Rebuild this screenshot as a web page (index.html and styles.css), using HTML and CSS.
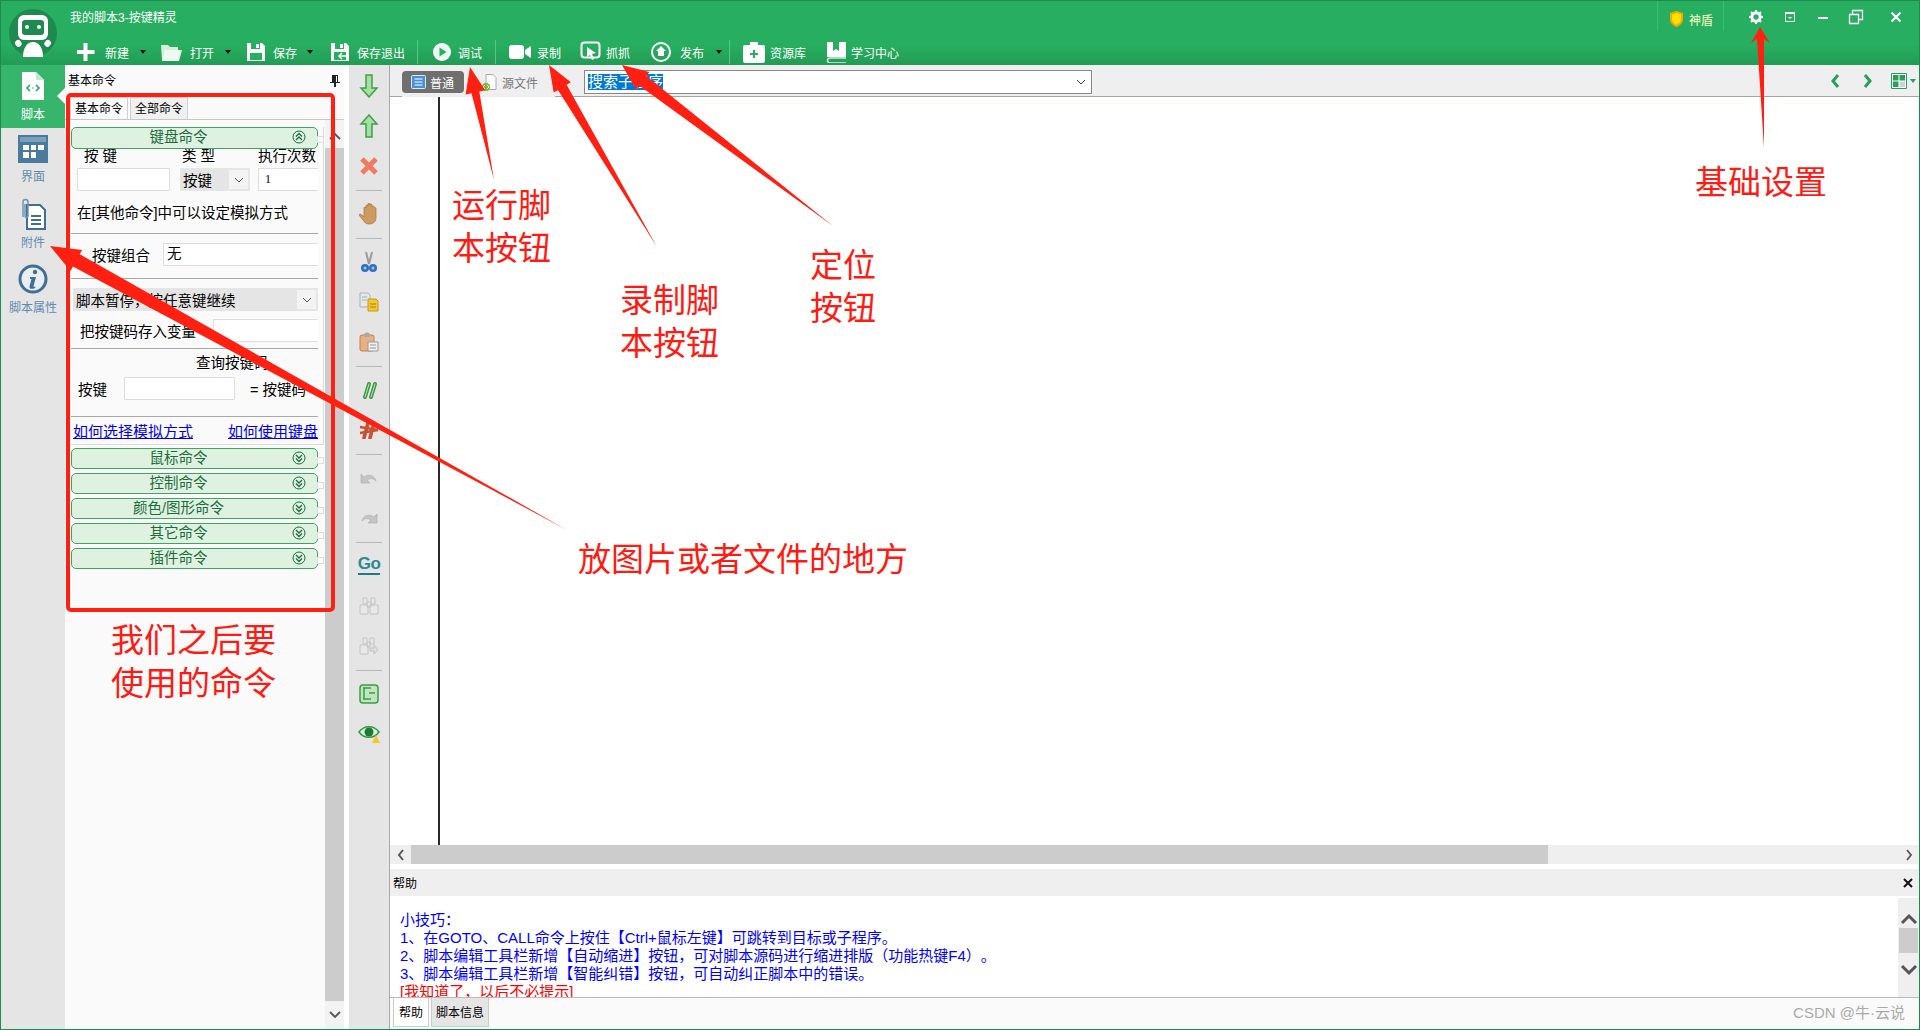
FILE: index.html
```html
<!DOCTYPE html>
<html lang="zh">
<head>
<meta charset="utf-8">
<title>按键精灵</title>
<link rel="stylesheet" href="styles.css">
</head>
<body>
<div class="app">
  <header class="titlebar">
    <div class="logo">
      <svg width="48" height="48" viewBox="0 0 48 48"><circle cx="24" cy="24" r="24" fill="#1f8a50"/><rect x="6" y="31" width="6" height="7" rx="3" fill="#fff" transform="rotate(-40 9 34)"/><rect x="36" y="31" width="6" height="7" rx="3" fill="#fff" transform="rotate(40 39 34)"/><path d="M14 48c0-9 4-15 10-15s10 6 10 15z" fill="#fff"/><rect x="9" y="6" width="30" height="25" rx="6" fill="#fff"/><rect x="13" y="11" width="22" height="15" rx="3" fill="#1f8a50"/><circle cx="18" cy="18" r="2" fill="#fff"/><circle cx="30" cy="18" r="2" fill="#fff"/></svg>
    </div>
    <div class="title-main">
      <div class="title-row">
        <span class="app-title">我的脚本3-按键精灵</span>
        <div class="shield">
          <svg width="15" height="16" viewBox="0 0 15 16"><path d="M7.5 0 14 2v6c0 4-3 6.500-6.500 8C4 14.500 1 12 1 8V2z" fill="#f5a800"/><path d="M7.500 2 12 3.500V8c0 3-2 4.500-4.500 5.800C5 12.500 3 11 3 8V3.500z" fill="#ffe100"/></svg>
          <span>神盾</span>
        </div>
        <div class="win-controls">
          <svg class="wc" width="16" height="16" viewBox="0 0 16 16"><circle cx="8" cy="8" r="4.200" fill="none" stroke="#fff" stroke-width="3"/><path d="M8 1v3M8 12v3M1 8h3M12 8h3M3 3l2 2M11 11l2 2M13 3l-2 2M5 11l-2 2" stroke="#fff" stroke-width="2"/></svg>
          <svg class="wc" width="14" height="14" viewBox="0 0 14 14"><path d="M2.500 2.500h9v9h-9z" fill="none" stroke="#fff"/><path d="M2 2h10v2H2z" fill="#fff"/><path d="M5 7h4L7 9z" fill="#fff"/></svg>
          <svg class="wc" width="14" height="14" viewBox="0 0 14 14"><path d="M2 7h10v2H2z" fill="#fff"/></svg>
          <svg class="wc" width="16" height="16" viewBox="0 0 16 16"><path d="M1.500 5.500h9v9h-9zM4.500 5V1.500h10v9H11" fill="none" stroke="#fff" stroke-width="1.300"/></svg>
          <svg class="wc" width="14" height="14" viewBox="0 0 14 14"><path d="M2.500 2.500l9 9M11.500 2.500l-9 9" stroke="#fff" stroke-width="2.200"/></svg>
        </div>
      </div>
      <nav class="toolbar">
        <div class="tool t-new"><svg width="20" height="20" viewBox="0 0 20 20"><path d="M7.500 1h4v7h7v4h-7v7h-4v-7H.5V8h7z" fill="#fff" transform="translate(-1 0)"/></svg><span>新建</span><i class="drop"></i></div>
        <div class="tool t-open"><svg width="22" height="20" viewBox="0 0 22 20"><path d="M1 3h7l2 2h8v3H6L3 18H2z" fill="#d6efdf"/><path d="M5 8h17l-3 11H2z" fill="#eef9f2"/></svg><span>打开</span><i class="drop"></i></div>
        <div class="tool t-save"><svg width="20" height="20" viewBox="0 0 20 20"><path d="M1 1h15l3 3v15H1z" fill="#fff"/><path d="M5 1h9v6H5zM4 11h12v7H4z" fill="#27ae60"/><path d="M10 2h3v4h-3z" fill="#fff"/></svg><span>保存</span><i class="drop"></i></div>
        <div class="tool t-exit"><svg width="21" height="20" viewBox="0 0 21 20"><path d="M1 1h15l3 3v15H1z" fill="#fff"/><path d="M5 1h9v6H5zM4 10h12v8H4z" fill="#27ae60"/><path d="M10 2h3v4h-3z" fill="#fff"/><path d="M17 14H9M12 11l-3 3 3 3" fill="none" stroke="#fff" stroke-width="1.500"/></svg><span>保存退出</span></div>
        <i class="tb-sep"></i>
        <div class="tool t-run"><svg width="20" height="20" viewBox="0 0 20 20"><circle cx="10" cy="10" r="8" fill="#eaf7ef" stroke="#fff" stroke-width="2"/><path d="M7.500 5.500v9l7-4.500z" fill="#27ae60"/></svg><span>调试</span></div>
        <i class="tb-sep"></i>
        <div class="tool t-rec"><svg width="22" height="18" viewBox="0 0 22 18"><rect x="0" y="2" width="15" height="14" rx="3" fill="#fff"/><path d="M16 7l6-4v12l-6-4z" fill="#fff"/></svg><span>录制</span></div>
        <div class="tool t-cap"><svg width="22" height="22" viewBox="0 0 22 22"><rect x="1.500" y="1.500" width="18" height="15" rx="3" fill="none" stroke="#fff" stroke-width="2"/><path d="M7 6l9 6-4 1 2 5-2 1-2-5-3 2z" fill="#fff"/></svg><span>抓抓</span></div>
        <div class="tool t-pub"><svg width="20" height="22" viewBox="0 0 20 22"><circle cx="10" cy="11" r="9" fill="none" stroke="#fff" stroke-width="2"/><path d="M10 5l5 5h-2v5H7v-5H5z" fill="#fff"/></svg><span>发布</span><i class="drop"></i></div>
        <i class="tb-sep"></i>
        <div class="tool t-res"><svg width="22" height="22" viewBox="0 0 22 22"><path d="M7 4V1h8v3h5a2 2 0 0 1 2 2v14a2 2 0 0 1-2 2H2a2 2 0 0 1-2-2V6a2 2 0 0 1 2-2z" fill="#fff"/><path d="M10 9h2v3h3v2h-3v3h-2v-3H7v-2h3z" fill="#27ae60"/></svg><span>资源库</span></div>
        <div class="tool t-learn"><svg width="21" height="22" viewBox="0 0 21 22"><path d="M1 1h6v9l3-2 3 2V1h7v15H1z" fill="#fff"/><path d="M20 17H4a2.500 2.500 0 0 0 0 5h16" fill="none" stroke="#d8f0e0" stroke-width="1.500"/></svg><span>学习中心</span></div>
      </nav>
    </div>
  </header>

  <main class="main">
    <aside class="sidebar">
      <div class="side-item active">
        <svg width="24" height="28" viewBox="0 0 24 28"><path d="M1 0h14l8 8v20H1z" fill="#fff"/><path d="M15 0v8h8z" fill="#bfe8cf"/><path d="M9 13l-3 3 3 3M15 13l3 3-3 3M11.500 16h1" fill="none" stroke="#27ae60" stroke-width="1.700"/></svg>
        <span>脚本</span>
      </div>
      <div class="side-item">
        <svg width="30" height="28" viewBox="0 0 30 28"><rect width="30" height="28" fill="#4a7a9e"/><rect x="2" y="2" width="26" height="5" fill="#7aa0bc"/><path d="M5 10h6v5H5zM13 10h5v5h-5zM20 10h6v5h-6zM5 17h6v6H5zM13 17h5v6h-5z" fill="#fff"/></svg>
        <span>界面</span>
      </div>
      <div class="side-item attach">
        <svg width="28" height="32" viewBox="0 0 28 32"><path d="M8 7h13l5 5v19H8z" fill="#fff" stroke="#3f6f94" stroke-width="2"/><path d="M12 18h10M12 22h10M12 26h10" stroke="#3f6f94" stroke-width="2"/><path d="M4 19V4a2.500 2.500 0 0 1 5 0v14a1.500 1.500 0 0 1-3 0V6" fill="none" stroke="#6d97b6" stroke-width="1.500"/></svg>
        <span>附件</span>
      </div>
      <div class="side-item">
        <svg width="30" height="30" viewBox="0 0 30 30"><circle cx="15" cy="15" r="13" fill="#e8eef3" stroke="#3f6f94" stroke-width="3"/><circle cx="17" cy="8" r="2.200" fill="#3f6f94"/><path d="M12 13h6l-2.500 9c0 1 1 1 2 .5l-.5 1.500c-3 1.500-6 1-5.500-1.500l2-7.500H12z" fill="#3f6f94"/></svg>
        <span>脚本属性</span>
      </div>
    </aside>

    <section class="panel">
      <div class="panel-head">
        <span>基本命令</span>
        <svg width="10" height="12" viewBox="0 0 10 12"><path d="M2 0h6v7h2v1H6v4H4V8H0V7h2z" fill="#222"/><path d="M6 1h1v6H6z" fill="#fff"/></svg>
      </div>
      <div class="cmd-tabs"><span class="cmd-tab on">基本命令</span><span class="cmd-tab">全部命令</span></div>
      <div class="panel-body">
        <div class="cmds">
          <div class="keyboard">
            <div class="group open"><span>键盘命令</span>
              <svg class="g-icon" width="14" height="14" viewBox="0 0 14 14"><circle cx="7" cy="7" r="6" fill="none" stroke="#1d6b3c"/><path d="M4 6.500 7 3.500l3 3M4 10 7 7l3 3" fill="none" stroke="#1d6b3c" stroke-width="1.300"/></svg></div>
            <div class="form">
              <div class="f-grid labels"><span class="l1">按 键</span><span class="l2">类 型</span><span>执行次数</span></div>
              <div class="f-grid"><div class="field"></div><div class="combo-s"><span>按键</span><b class="chev-box"><svg width="10" height="6" viewBox="0 0 10 6"><path d="M1 1l4 4 4-4" fill="none" stroke="#555"/></svg></b></div><div class="field num">1</div></div>
              <p class="note">在[其他命令]中可以设定模拟方式</p>
              <hr class="rule">
              <div class="f-combo"><span>按键组合</span><div class="field wide">无</div></div>
              <hr class="rule">
              <div class="combo-s full"><span>脚本暂停，按任意键继续</span><b class="chev-box"><svg width="10" height="6" viewBox="0 0 10 6"><path d="M1 1l4 4 4-4" fill="none" stroke="#555"/></svg></b></div>
              <div class="f-var"><span>把按键码存入变量</span><div class="field grow"></div></div>
              <hr class="rule r-var">
              <div class="q-title">查询按键码</div>
              <div class="f-query"><span>按键</span><div class="field q"></div><span class="eq">= 按键码</span></div>
              <hr class="rule r-q">
              <div class="links"><a href="#">如何选择模拟方式</a><a href="#">如何使用键盘</a></div>
            </div>
          </div>
          <div class="groups">
            <div class="group"><span>鼠标命令</span><svg class="g-icon" width="14" height="14" viewBox="0 0 14 14"><circle cx="7" cy="7" r="6" fill="none" stroke="#1d6b3c"/><path d="M4 4 7 7l3-3M4 7.500l3 3 3-3" fill="none" stroke="#1d6b3c" stroke-width="1.300"/></svg></div>
            <div class="group"><span>控制命令</span><svg class="g-icon" width="14" height="14" viewBox="0 0 14 14"><circle cx="7" cy="7" r="6" fill="none" stroke="#1d6b3c"/><path d="M4 4 7 7l3-3M4 7.500l3 3 3-3" fill="none" stroke="#1d6b3c" stroke-width="1.300"/></svg></div>
            <div class="group"><span>颜色/图形命令</span><svg class="g-icon" width="14" height="14" viewBox="0 0 14 14"><circle cx="7" cy="7" r="6" fill="none" stroke="#1d6b3c"/><path d="M4 4 7 7l3-3M4 7.500l3 3 3-3" fill="none" stroke="#1d6b3c" stroke-width="1.300"/></svg></div>
            <div class="group"><span>其它命令</span><svg class="g-icon" width="14" height="14" viewBox="0 0 14 14"><circle cx="7" cy="7" r="6" fill="none" stroke="#1d6b3c"/><path d="M4 4 7 7l3-3M4 7.500l3 3 3-3" fill="none" stroke="#1d6b3c" stroke-width="1.300"/></svg></div>
            <div class="group"><span>插件命令</span><svg class="g-icon" width="14" height="14" viewBox="0 0 14 14"><circle cx="7" cy="7" r="6" fill="none" stroke="#1d6b3c"/><path d="M4 4 7 7l3-3M4 7.500l3 3 3-3" fill="none" stroke="#1d6b3c" stroke-width="1.300"/></svg></div>
          </div>
        </div>
        <div class="panel-scroll">
          <div class="ps-btn"><svg width="12" height="8" viewBox="0 0 12 8"><path d="M1 7l5-5 5 5" fill="none" stroke="#555" stroke-width="1.800"/></svg></div>
          <div class="ps-thumb"></div>
          <div class="ps-btn end"><svg width="12" height="8" viewBox="0 0 12 8"><path d="M1 1l5 5 5-5" fill="none" stroke="#555" stroke-width="1.800"/></svg></div>
        </div>
      </div>
    </section>

    <aside class="edit-tools">
      <div class="et"><svg width="20" height="24" viewBox="0 0 20 24"><path d="M7 1h6v13h5l-8 9-8-9h5z" fill="#a6e0a0" stroke="#3f9f4f" stroke-width="1.500"/></svg></div>
      <div class="et"><svg width="20" height="24" viewBox="0 0 20 24"><path d="M7 23h6V10h5L10 1 2 10h5z" fill="#a6e0a0" stroke="#3f9f4f" stroke-width="1.500"/></svg></div>
      <div class="et"><svg width="20" height="20" viewBox="0 0 20 20"><path d="M3 3l14 14M17 3 3 17" stroke="#f27a62" stroke-width="5"/></svg></div>
      <i class="et-sep"></i>
      <div class="et"><svg width="20" height="22" viewBox="0 0 20 22"><path d="M7 3a1 1 0 0 1 2 0V1a1 1 0 0 1 2 0v1a1 1 0 0 1 2 0v2a1 1 0 0 1 2 0l2 1v9c0 5-3 7-7 7-3 0-5-2-6-4L0 12c0-1 2-1 3 0l2 2V5a1 1 0 0 1 2 0z" fill="#cf9a62" stroke="#a87038" stroke-width=".7"/></svg></div>
      <i class="et-sep"></i>
      <div class="et"><svg width="18" height="22" viewBox="0 0 18 22"><path d="M6 1l3 12M12 1 9 13" stroke="#9a9a9a" stroke-width="2"/><circle cx="5" cy="17" r="4" fill="#2f6fc0"/><circle cx="13" cy="17" r="4" fill="#2f6fc0"/><circle cx="5" cy="17" r="1.500" fill="#9fc4ee"/><circle cx="13" cy="17" r="1.500" fill="#9fc4ee"/></svg></div>
      <div class="et"><svg width="20" height="20" viewBox="0 0 20 20"><path d="M1 1h8l2 2v12H1z" fill="#e4e8ea" stroke="#a8b4b8"/><path d="M3 5h5M3 8h5" stroke="#a8b4b8"/><path d="M9 7h8l2 2v10H9z" fill="#f3c62f" stroke="#c49a18"/><path d="M11 12h6M11 15h6" stroke="#a88010"/></svg></div>
      <div class="et"><svg width="20" height="20" viewBox="0 0 20 20"><rect x="1" y="3" width="14" height="16" rx="2" fill="#e9b080" stroke="#c08050"/><path d="M5 3a3 2.500 0 0 1 6 0v2H5z" fill="#aaa"/><path d="M9 10h10v9H9z" fill="#f0f0f0" stroke="#999"/><path d="M11 13h6M11 16h6" stroke="#999"/></svg></div>
      <i class="et-sep"></i>
      <div class="et"><svg width="18" height="18" viewBox="0 0 18 18"><path d="M5 16 9 3M11 16l4-13" stroke="#3e9a45" stroke-width="4" stroke-linecap="round"/><path d="M5 16 9 3M11 16l4-13" stroke="#b8e6b0" stroke-width="1" stroke-linecap="round"/></svg></div>
      <div class="et"><svg width="20" height="18" viewBox="0 0 20 18"><path d="M5 17 9 2M11 17l4-15" stroke="#c85030" stroke-width="3.500" stroke-linecap="round"/><path d="M1 6l18 3M1 12l18-3" stroke="#c85030" stroke-width="2.500"/></svg></div>
      <i class="et-sep"></i>
      <div class="et"><svg width="20" height="16" viewBox="0 0 20 16"><path d="M2 4v9h9l-3-3c3-2 6-2 9 1-1-5-7-8-12-4z" fill="#c4c4c4" stroke="#b0b0b0" stroke-width=".7"/></svg></div>
      <div class="et"><svg width="20" height="16" viewBox="0 0 20 16"><path d="M18 4v9H9l3-3C9 8 6 8 3 11c1-5 7-8 12-4z" fill="#c4c4c4" stroke="#b0b0b0" stroke-width=".7"/></svg></div>
      <i class="et-sep"></i>
      <div class="et go"><span>Go</span></div>
      <div class="et"><svg width="20" height="18" viewBox="0 0 20 18"><path d="M4 1h4v6H4zM12 1h4v6h-4zM1 8h8v9H1zM11 8h8v9h-8zM8 5h4v5H8z" fill="#e8e8e8" stroke="#c4c4c4"/></svg></div>
      <div class="et"><svg width="20" height="18" viewBox="0 0 20 18"><path d="M4 1h4v6H4zM11 1h4v6h-4zM1 8h8v9H1zM8 5h3v5H8z" fill="#e8e8e8" stroke="#c4c4c4"/><path d="M11 11h4V8l4 5-4 4v-3h-4z" fill="#ddd" stroke="#c4c4c4"/></svg></div>
      <i class="et-sep"></i>
      <div class="et"><svg width="20" height="20" viewBox="0 0 20 20"><rect x="1" y="1" width="18" height="18" rx="3" fill="#bfe6bf" stroke="#3e9a45" stroke-width="1.500"/><path d="M4 4h8M10 9h6M4 15h8M5 4v11" stroke="#3e9a45" stroke-width="1.500"/></svg></div>
      <div class="et"><svg width="22" height="20" viewBox="0 0 22 20"><path d="M1 8c5-7 15-7 20 0-5 7-15 7-20 0z" fill="#dff3df" stroke="#2f9a45" stroke-width="1.500"/><circle cx="11" cy="8" r="4.500" fill="#1c7a35"/><path d="M14 19l4-8 4 8z" fill="#f6c62a"/></svg></div>
    </aside>

    <section class="content">
      <div class="tabbar">
        <div class="view-tabs">
          <div class="v-tab on"><svg width="15" height="14" viewBox="0 0 15 14"><rect x=".5" y=".5" width="14" height="13" rx="1" fill="#4a90d9" stroke="#dce9f7"/><path d="M3.500 4h8M3.500 7h8M3.500 10h8" stroke="#fff"/></svg><span>普通</span></div>
          <div class="v-tab"><svg width="16" height="17" viewBox="0 0 16 17"><path d="M5 .5h7l3 3v12H5z" fill="#fff" stroke="#aaa"/><circle cx="5" cy="13" r="4" fill="#7ab52a"/><path d="M4 11l-2 2 2 2M6 11l2 2-2 2" fill="none" stroke="#fff"/></svg><span>源文件</span></div>
        </div>
        <div class="search-box"><span class="sel">搜索子程序</span><svg width="10" height="6" viewBox="0 0 10 6"><path d="M1 1l4 4 4-4" fill="none" stroke="#444"/></svg></div>
        <div class="nav-btns">
          <svg width="10" height="14" viewBox="0 0 10 14"><path d="M8 1 3 7l5 6" fill="none" stroke="#27a05c" stroke-width="3"/></svg>
          <svg width="10" height="14" viewBox="0 0 10 14"><path d="M2 1l5 6-5 6" fill="none" stroke="#27a05c" stroke-width="3"/></svg>
          <div class="layout-btn"><svg width="16" height="16" viewBox="0 0 16 16"><path d="M.5.5h15v15H.5z" fill="#fff" stroke="#27a05c"/><path d="M2 2h5.500v5.500H2zM8.500 2H14v5.500H8.500zM2 8.500h5.500V14H2z" fill="#27a05c"/><path d="M8.500 8.500H14V14H8.500z" fill="#d0d0dc"/></svg><svg width="6" height="4" viewBox="0 0 6 4"><path d="M0 0h6L3 4z" fill="#27a05c"/></svg></div>
        </div>
      </div>
      <div class="editor"><div class="gutter"></div></div>
      <div class="hscroll">
        <div class="hs-btn"><svg width="8" height="12" viewBox="0 0 8 12"><path d="M6 1 2 6l4 5" fill="none" stroke="#555" stroke-width="2"/></svg></div>
        <div class="hs-thumb"></div>
        <div class="hs-rest"><svg width="8" height="12" viewBox="0 0 8 12"><path d="M2 1l4 5-4 5" fill="none" stroke="#555" stroke-width="1.800"/></svg></div>
      </div>
      <div class="help-head"><span>帮助</span><svg width="10" height="10" viewBox="0 0 10 10"><path d="M1 1l8 8M9 1 1 9" stroke="#111" stroke-width="2"/></svg></div>
      <div class="help-body">
        <div class="tips">
          <p>小技巧：</p>
          <p>1、在GOTO、CALL命令上按住【Ctrl+鼠标左键】可跳转到目标或子程序。</p>
          <p>2、脚本编辑工具栏新增【自动缩进】按钮，可对脚本源码进行缩进排版（功能热键F4）。</p>
          <p>3、脚本编辑工具栏新增【智能纠错】按钮，可自动纠正脚本中的错误。</p>
          <p class="dismiss">[我知道了，以后不必提示]</p>
        </div>
        <div class="help-scroll">
          <svg width="18" height="12" viewBox="0 0 18 12"><path d="M2 10l7-7 7 7" fill="none" stroke="#555" stroke-width="3"/></svg>
          <div class="hp-thumb"></div>
          <svg width="18" height="12" viewBox="0 0 18 12"><path d="M2 2l7 7 7-7" fill="none" stroke="#555" stroke-width="3"/></svg>
        </div>
      </div>
      <div class="bottom-tabs"><span class="b-tab on">帮助</span><span class="b-tab">脚本信息</span><span class="mark">CSDN @牛·云说</span></div>
    </section>
  </main>

  <div class="red-box"></div>
  <svg class="arrows" width="1920" height="1030" viewBox="0 0 1920 1030">
    <polygon points="470,67 485.200,90.300 479.300,91.600 494,180 471.500,93.200 465.600,94.500"/>
    <polygon points="549,65 570.900,82.300 566.600,84.800 657,247 558,90 553.700,92.500"/>
    <polygon points="622,65 649.400,72.100 646.300,76 833,226 639.100,85.600 636,89.500"/>
    <polygon points="1760,27 1770,43 1764,39 1764,148 1757,39 1751,43"/>
    <polygon points="50,246 82.100,249.900 79.700,254.300 567,530 72.900,266.500 70.500,270.900"/>
  </svg>
  <div class="note-red n-run">运行脚<br>本按钮</div>
  <div class="note-red n-rec">录制脚<br>本按钮</div>
  <div class="note-red n-loc">定位<br>按钮</div>
  <div class="note-red n-set">基础设置</div>
  <div class="note-red n-cmd">我们之后要<br>使用的命令</div>
  <div class="note-red n-file">放图片或者文件的地方</div>
</div>
</body>
</html>
```
FILE: styles.css
```css
* { box-sizing: border-box; }
html, body { margin: 0; padding: 0; height: 100%; overflow: hidden; }
body { font-family: "Liberation Sans", "Noto Sans CJK SC", sans-serif; font-size: 14.5px; color: #000; background: #fff; text-spacing-trim: space-all; }
p { margin: 0; }
svg { display: block; flex: none; }

.app { position: relative; width: 1920px; height: 1030px; border: 1px solid #1e8a4d; display: flex; flex-direction: column; overflow: hidden; }

/* title bar */
.titlebar { height: 64px; flex: none; display: flex; background: linear-gradient(#27ae60 0, #27ae60 70%, #229b55 100%); color: #fff; }
.logo { width: 64px; flex: none; padding: 8px 0 0 8px; }
.title-main { flex: 1; display: flex; flex-direction: column; min-width: 0; }
.title-row { height: 38px; display: flex; align-items: flex-start; font-size: 12px; }
.app-title { margin: 8px 0 0 5px; line-height: 18px; }
.shield { margin-left: auto; height: 30px; width: 67px; border-left: 1px solid #3dbb73; border-right: 1px solid #3dbb73; display: flex; align-items: center; padding: 6px 0 0 11px; gap: 5px; color: #ffffc8; }
.win-controls { display: flex; align-items: center; height: 32px; width: 195px; }
.win-controls .wc:nth-child(1) { margin-left: 24px; }
.win-controls .wc:nth-child(2) { margin-left: 19px; }
.win-controls .wc:nth-child(3) { margin-left: 19px; }
.win-controls .wc:nth-child(4) { margin-left: 18px; }
.win-controls .wc:nth-child(5) { margin-left: 25px; }
.toolbar { height: 26px; display: flex; align-items: center; font-size: 12px; padding-left: 12px; }
.tool { display: flex; align-items: center; gap: 8px; white-space: nowrap; }
.drop { display: block; width: 0; height: 0; border: 3.5px solid transparent; border-top: 4px solid #111; border-bottom: 0; margin-left: 3px; }
.tb-sep { display: block; width: 1px; height: 24px; background: #58c487; }
.t-new { width: 83px; }
.t-open { width: 86px; }
.t-save { width: 84px; gap: 7px; }
.t-exit { width: 87px; gap: 6px; }
.t-run { margin-left: 14px; width: 63px; gap: 6px; }
.t-rec { margin-left: 13px; width: 71px; gap: 6px; }
.t-cap { width: 71px; gap: 4px; }
.t-pub { width: 78px; gap: 9px; }
.t-res { margin-left: 13px; width: 83px; gap: 5px; }
.t-learn { gap: 4px; }

/* main */
.main { flex: 1; display: flex; min-height: 0; }

.sidebar { width: 64px; flex: none; background: #e5e5e5; font-size: 12px; color: #5f8cae; }
.side-item { height: 63px; padding-top: 7px; display: flex; flex-direction: column; align-items: center; position: relative; }
.side-item span { line-height: 16px; margin-top: 6px; white-space: nowrap; }
.side-item.active span { margin-top: 7px; }
.side-item.attach { padding-top: 7px; height: 66px; }
.side-item.attach span { margin-top: 5px; }
.side-item.active { background: #38b56c; color: #fff; }
.side-item.active::after { content: ""; position: absolute; right: 0; top: 23px; border: 8px solid transparent; border-right-color: #fafafa; border-left: 0; }

.panel { width: 284px; flex: none; background: #fff; display: flex; flex-direction: column; padding-right: 5px; font-size: 12px; }
.panel-head { height: 32px; flex: none; display: flex; align-items: center; justify-content: space-between; padding: 0 4px 0 3px; line-height: 16px; background: #fafafa; }
.cmd-tabs { height: 23px; flex: none; display: flex; align-items: flex-end; padding-left: 5px; border-bottom: 1px solid #c8c8c8; gap: 2px; background: #fafafa; }
.cmd-tab { height: 22px; width: 58px; text-align: center; line-height: 23px; background: #f0f0f0; border: 1px solid #d0d0d0; border-bottom: 0; }
.cmd-tab.on { background: #fafafa; }
.panel-body { flex: 1; display: flex; min-height: 0; }
.cmds { width: 260px; flex: none; background: #fafafa; padding: 7px 0 0 6px; font-size: 14.5px; }
.keyboard { width: 253px; border-right: 1px solid #ddd; border-bottom: 1px solid #ddd; height: 318px; }
.group { position: relative; width: 247px; height: 21px; border: 1px solid #3fa55e; border-radius: 5px; background: #dff2e2; color: #1d6b3c; line-height: 18px; display: block; text-align: center; padding-right: 32px; font-size: 14.5px; }
.group.open { height: 22px; }
.group::after { content: ""; position: absolute; right: -7px; top: 8px; width: 5px; height: 5px; border: 1px solid #ddd; }
.g-icon { position: absolute; right: 11px; top: 2px; }
.form { width: 247px; padding-left: 0; }
.f-grid { display: grid; grid-template-columns: 103px 78px 60px; margin-left: 6px; }
.labels { height: 19px; line-height: 15px; white-space: nowrap; }
.labels .l1 { padding-left: 7px; }
.labels .l2 { padding-left: 2px; }
.field { height: 23px; background: #fff; border: 1px solid #ddd; border-radius: 1px; }
.f-grid .field { width: 93px; }
.f-grid .field.num { width: 60px; font: 12px/21px "Liberation Serif", serif; padding-left: 6px; border-right: 0; }
.combo-s { height: 23px; width: 70px; background: #e5e5e5; display: flex; align-items: center; justify-content: space-between; padding: 0 2px 0 3px; white-space: nowrap; }
.chev-box { width: 19px; height: 19px; background: #f3f3f3; display: flex; align-items: center; justify-content: center; }
.note { margin: 0 0 0 6px; height: 42px; line-height: 44px; white-space: nowrap; }
.rule { height: 1px; border: 0; background: #a8a8a8; margin: 0; }
.f-combo { height: 44px; display: flex; align-items: center; padding: 0 0 3px 21px; gap: 13px; }
.field.wide { flex: 1; line-height: 20px; padding-left: 3px; border-right: 0; }
.combo-s.full { width: 245px; margin: 9px 0 0 2px; }
.f-var { height: 23px; margin-top: 8px; display: flex; align-items: center; padding-left: 9px; gap: 17px; white-space: nowrap; }
.field.grow { flex: 1; border-right: 0; }
.r-var { margin-top: 6px; }
.q-title { height: 28px; line-height: 28px; padding-left: 125px; }
.f-query { display: flex; align-items: center; height: 23px; padding-left: 7px; white-space: nowrap; }
.field.q { width: 111px; margin-left: 17px; }
.eq { margin-left: 15px; }
.r-q { margin-top: 16px; }
.links { height: 26px; display: flex; justify-content: space-between; align-items: center; padding-left: 2px; font-size: 15px; white-space: nowrap; }
.links a { color: #0000ee; text-decoration: underline; }
.groups { display: flex; flex-direction: column; gap: 4px; margin-top: 3px; }
.panel-scroll { width: 19px; flex: none; background: #f3f3f3; display: flex; flex-direction: column; align-items: center; }
.ps-btn { height: 28px; padding-top: 12px; }
.ps-thumb { width: 19px; height: 856px; background: #cccccc; }
.ps-btn.end { padding-top: 10px; }

.edit-tools { width: 41px; flex: none; background: #e5e5e5; border-right: 1px solid #aaa; padding-top: 1px; }
.et { height: 40px; display: flex; align-items: center; justify-content: center; }
.et-sep { display: block; width: 26px; height: 1px; background: #b9b9b9; margin: 4px 0 3px 7px; }
.go { padding-bottom: 2px; }
.go span { font-size: 17px; line-height: 18px; color: #2a8a94; border-bottom: 2px solid #1f7c86; letter-spacing: -.5px; font-weight: 700; }

.content { flex: 1; display: flex; flex-direction: column; min-width: 0; font-size: 12px; }
.tabbar { height: 32px; flex: none; background: #efefef; border-bottom: 1px solid #aaa59a; display: flex; align-items: center; }
.view-tabs { height: 32px; width: 153px; margin: 0 0 -1px 12px; background: #efefef; display: flex; align-items: center; position: relative; align-self: flex-start; gap: 17px; padding-top: 2px; }
.v-tab { display: flex; align-items: center; gap: 5px; color: #777; white-space: nowrap; }
.v-tab.on { width: 62px; height: 22px; background: #6f6f6f; color: #fff; border-radius: 4px; padding-left: 9px; gap: 4px; }
.search-box { width: 508px; height: 24px; margin: 3px 0 0 29px; background: #fff; border: 1px solid #888; display: flex; align-items: center; justify-content: space-between; padding: 0 5px 0 3px; }
.sel { background: #0078d7; color: #fff; font-size: 15px; line-height: 16px; }
.nav-btns { margin-left: auto; display: flex; align-items: center; padding-right: 3px; margin-top: 1px; }
.nav-btns > svg:first-child { margin-right: 23px; }
.layout-btn { display: flex; align-items: center; gap: 3px; margin-left: 18px; }

.editor { flex: 1; background: #fff; min-height: 0; }
.gutter { width: 2px; height: 100%; background: #2a2a2a; margin-left: 48px; }
.hscroll { height: 19px; flex: none; display: flex; background: #efefef; }
.hs-btn { width: 21px; display: flex; align-items: center; justify-content: center; }
.hs-thumb { width: 1137px; background: #ccc; }
.hs-rest { flex: 1; display: flex; align-items: center; justify-content: flex-end; padding-right: 6px; }
.help-head { height: 27px; margin-top: 5px; flex: none; background: #efefef; display: flex; align-items: center; justify-content: space-between; padding: 0 6px 0 3px; }
.help-body { height: 101px; flex: none; display: flex; background: #fff; overflow: hidden; }
.tips { flex: 1; padding: 15px 0 0 10px; font-size: 15px; line-height: 18px; color: #0000ff; white-space: nowrap; }
.dismiss { color: #f00; }
.help-scroll { width: 21px; height: 99px; margin-top: 2px; background: #efefef; display: flex; flex-direction: column; align-items: center; padding-top: 15px; }
.hp-thumb { width: 19px; height: 25px; background: #ccc; margin: 3px 0 11px; }
.bottom-tabs { height: 32px; flex: none; background: #fafafa; border-top: 1px solid #bbb; display: flex; align-items: flex-start; padding-left: 3px; gap: 2px; position: relative; }
.b-tab { height: 29px; line-height: 30px; padding: 0 4px; background: #e5e5e5; border: 1px solid #ccc; border-top: 0; }
.b-tab.on { background: #fff; padding: 0 5px; }
.mark { margin-left: auto; margin-right: 14px; line-height: 30px; font-size: 15px; color: #aaa; }

/* annotation layer */
.red-box { position: absolute; left: 65px; top: 92px; width: 269px; height: 519px; border: 4px solid #ff2011; border-radius: 5px; }
.arrows { position: absolute; left: -1px; top: -1px; pointer-events: none; }
.arrows polygon { fill: #ff2011; }
.note-red { position: absolute; color: #ff1a12; font-size: 33px; line-height: 43px; white-space: nowrap; }
.n-run { left: 451px; top: 183px; }
.n-rec { left: 619px; top: 278px; }
.n-loc { left: 809px; top: 243px; }
.n-set { left: 1694px; top: 160px; }
.n-cmd { left: 110px; top: 618px; }
.n-file { left: 577px; top: 537px; }
```
